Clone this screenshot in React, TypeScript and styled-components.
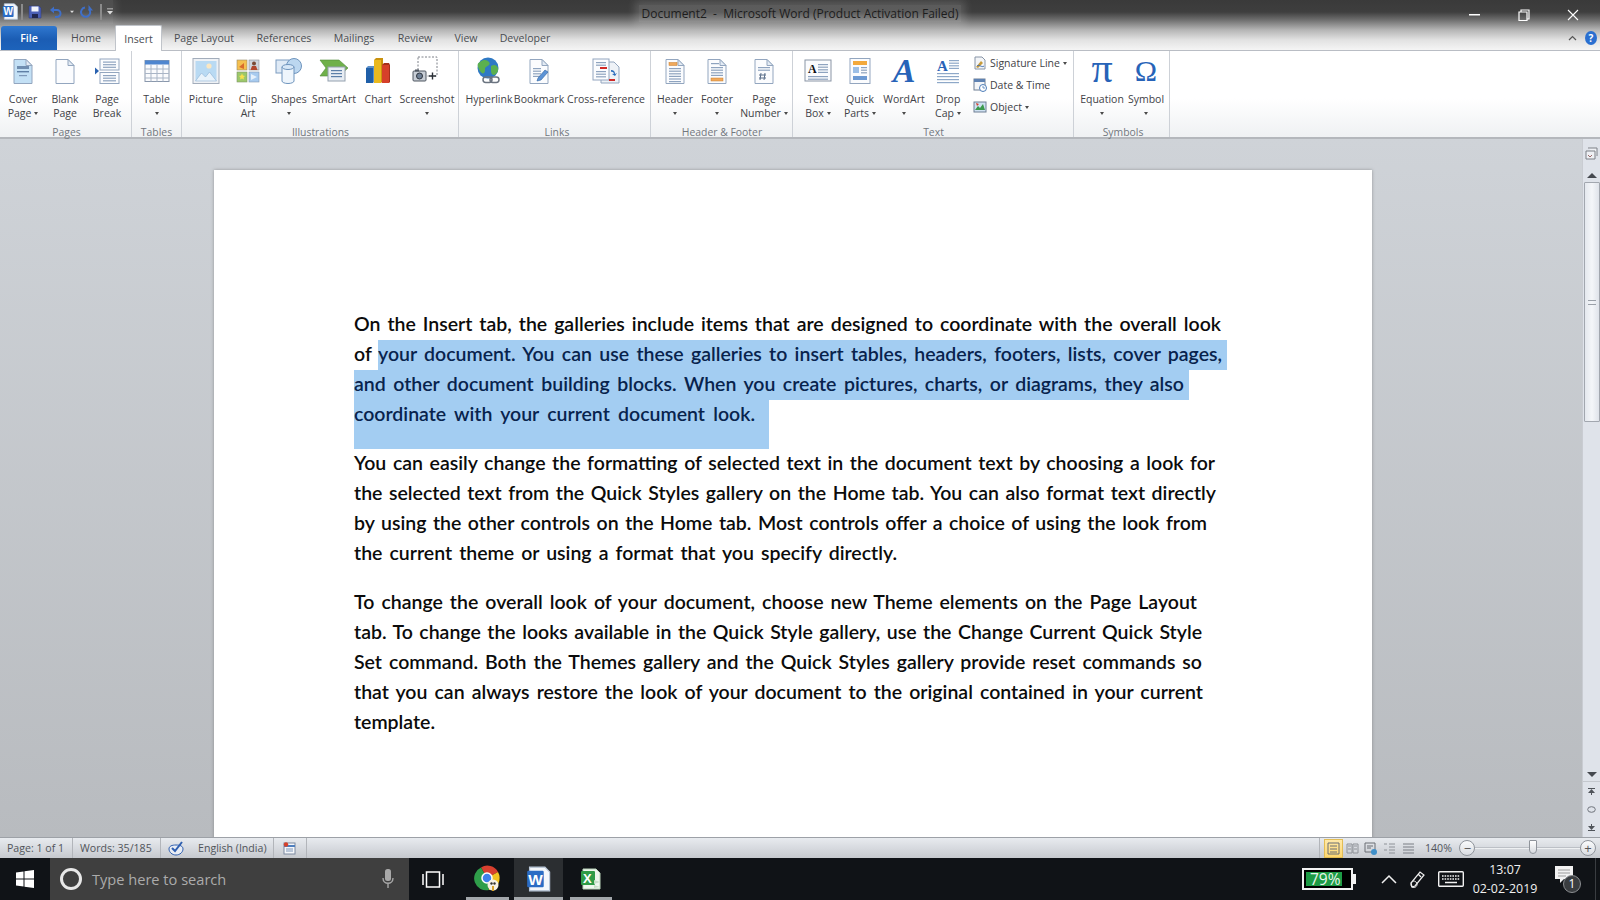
import React from "react";
import styled, { createGlobalStyle } from "styled-components";

const GlobalStyle = createGlobalStyle`
  html, body { margin: 0; padding: 0; width: 1600px; height: 900px; overflow: hidden; }
  body { font-family: "Open Sans", "Liberation Sans", sans-serif; }
  * { box-sizing: border-box; }
`;

const Window = styled.div`
  width: 1600px;
  height: 900px;
  display: flex;
  flex-direction: column;
  overflow: hidden;
`;

/* ---------- title bar + tabs ---------- */
const Chrome = styled.header`
  height: 51px;
  flex: none;
  display: flex;
  flex-direction: column;
  background: linear-gradient(#3a3a3a 0, #3e3e3e 12px, #6f6f6f 20px, #b5b5b5 30px, #e2e2e2 40px, #f5f5f5 50px);
`;

const TitleRow = styled.div`
  height: 26px;
  display: grid;
  grid-template-columns: 500px 1fr 500px;
  align-items: center;
`;

const Qat = styled.div`
  display: flex;
  align-items: center;
  height: 24px;
  padding-left: 2px;
  justify-self: start;
  background: rgba(255, 255, 255, 0.1);
  box-shadow: 0 0 8px 3px rgba(255, 255, 255, 0.1);
  margin-top: -3px;
`;

const QatSep = styled.span`
  width: 2px;
  height: 16px;
  margin: 0 5px 0 2px;
  background: #8b8b8b;
`;

const QatSlot = styled.span<{ $w: number }>`
  width: ${(p) => p.$w}px;
  display: flex;
  align-items: center;
  justify-content: center;
`;

const Title = styled.div`
  justify-self: center;
  font-size: 12px;
  color: #1d1d1d;
  white-space: pre;
  padding: 0 2px;
  background: rgba(255, 255, 255, 0.16);
  box-shadow: 0 0 9px 4px rgba(255, 255, 255, 0.16);
`;

const WindowButtons = styled.div`
  justify-self: end;
  display: flex;
  margin-right: 3px;
  margin-top: 4px;
`;

const WindowButton = styled.span`
  width: 49px;
  height: 20px;
  display: flex;
  align-items: center;
  justify-content: center;
  color: #fff;
`;

const TabRow = styled.nav`
  height: 25px;
  display: flex;
  align-items: flex-end;
  padding-left: 1px;
  border-bottom: 1px solid #b9bdc4;
`;

const Tab = styled.div<{ $w: number; $active?: boolean }>`
  width: ${(p) => p.$w}px;
  height: ${(p) => (p.$active ? "26px" : "24px")};
  margin-bottom: ${(p) => (p.$active ? "-1px" : "0")};
  display: flex;
  align-items: center;
  justify-content: center;
  font-size: 10.6px;
  color: #4a4d52;
  ${(p) =>
    p.$active &&
    `background: #fff;
     border: 1px solid #c0c4ca;
     border-bottom: none;
     border-radius: 2px 2px 0 0;`}
`;

const FileTab = styled.div`
  width: 56px;
  height: 24px;
  display: flex;
  align-items: center;
  justify-content: center;
  font-size: 10.6px;
  font-weight: 600;
  color: #fff;
  background: linear-gradient(#2f78d0, #1b5db4 55%, #1d63bb);
  border-radius: 3px 3px 0 0;
`;

const TabSpacer = styled.div`
  flex: 1;
`;

const RibbonTools = styled.div`
  display: flex;
  align-items: center;
  gap: 8px;
  padding: 0 3px 5px 0;
`;

const HelpDot = styled.span`
  width: 12px;
  height: 14px;
  border-radius: 50%;
  background: #2a6fd0;
  color: #fff;
  font-size: 10px;
  font-weight: 700;
  line-height: 14px;
  text-align: center;
`;

/* ---------- ribbon ---------- */
const Ribbon = styled.section`
  height: 88px;
  flex: none;
  display: flex;
  background: linear-gradient(#fff 55%, #eff1f3 100%);
  border-bottom: 2px solid #b4b7bc;
`;

const Group = styled.div<{ $w: number; $pad?: number }>`
  width: ${(p) => p.$w}px;
  flex: none;
  display: flex;
  flex-direction: column;
  padding-left: ${(p) => p.$pad ?? 0}px;
  border-right: 1px solid #cdd1d7;
`;

const GroupBody = styled.div`
  height: 71px;
  flex: none;
  display: flex;
`;

const GroupLabel = styled.div`
  flex: 1;
  font-size: 10.4px;
  line-height: 21px;
  text-align: center;
  color: #72777e;
`;

const BigButton = styled.div<{ $w: number }>`
  width: ${(p) => p.$w}px;
  flex: none;
  display: flex;
  flex-direction: column;
  align-items: center;
`;

const IconSlot = styled.div`
  height: 41px;
  padding: 5px 0 6px;
  display: flex;
  align-items: center;
  justify-content: center;
`;

const LabelLine = styled.div`
  height: 14px;
  display: flex;
  align-items: center;
  gap: 3px;
  font-size: 10.5px;
  color: #3f4247;
  white-space: nowrap;
`;

const Caret = styled.span`
  width: 0;
  height: 0;
  border-left: 2.5px solid transparent;
  border-right: 2.5px solid transparent;
  border-top: 3px solid #4a4a4a;
`;

const SmallStack = styled.div`
  margin-left: 7px;
  display: flex;
  flex-direction: column;
  padding-top: 1px;
`;

const SmallButton = styled.div`
  height: 22px;
  display: flex;
  align-items: center;
  gap: 3px;
  font-size: 10.5px;
  color: #3f4247;
  white-space: nowrap;
`;

const Glyph = styled.span<{ $size: number; $italic?: boolean; $weight?: number; $lift?: number }>`
  font-family: "Liberation Serif", "DejaVu Serif", serif;
  font-size: ${(p) => p.$size}px;
  font-style: ${(p) => (p.$italic ? "italic" : "normal")};
  font-weight: ${(p) => p.$weight ?? 700};
  line-height: 30px;
  padding-bottom: ${(p) => p.$lift ?? 0}px;
  color: #2763b8;
`;

/* ---------- document area ---------- */
const Workspace = styled.main`
  flex: 1;
  min-height: 0;
  display: flex;
`;

const Canvas = styled.div`
  flex: 1;
  overflow: hidden;
  padding: 31px 0 0 214px;
  background: linear-gradient(#cfd3d8, #b8bbbf);
`;

const Sheet = styled.article`
  width: 1158px;
  height: 700px;
  padding: 138.5px 0 0 140px;
  background: #fff;
  box-shadow: 0 0 3px rgba(90, 90, 90, 0.5);
  font-family: Lato, "Open Sans", sans-serif;
  font-size: 19.5px;
  font-weight: 600;
  color: #0b0b0b;
`;

const Paragraph = styled.div<{ $after: number }>`
  margin-bottom: ${(p) => p.$after}px;
`;

const Line = styled.div<{ $w: number; $h?: number }>`
  width: ${(p) => p.$w}px;
  height: ${(p) => p.$h ?? 30.1}px;
  line-height: 30px;
  text-align: justify;
  text-align-last: justify;
`;

const MixedLine = styled.div`
  display: flex;
  height: 30px;
  line-height: 27px;
`;

const Unselected = styled.span<{ $w: number }>`
  width: ${(p) => p.$w}px;
  flex: none;
`;

const Selected = styled.div<{ $w: number; $trail?: number; $extra?: number }>`
  width: ${(p) => p.$w}px;
  height: ${(p) => 30 + (p.$extra ?? 0)}px;
  line-height: 27px;
  padding-right: ${(p) => p.$trail ?? 5}px;
  background: #a3cdf2;
  color: #08234d;
  text-align: justify;
  text-align-last: justify;
`;

const ScrollBar = styled.aside`
  width: 18px;
  flex: none;
  display: flex;
  flex-direction: column;
  align-items: center;
  background: #dfe3ea;
  border-left: 1px solid #c9ccd2;
`;

const ScrollButton = styled.div<{ $h: number }>`
  height: ${(p) => p.$h}px;
  width: 100%;
  flex: none;
  display: flex;
  align-items: center;
  justify-content: center;
`;

const ScrollThumb = styled.div`
  width: 16px;
  height: 240px;
  flex: none;
  display: flex;
  align-items: center;
  justify-content: center;
  border: 1px solid #a2a7af;
  border-radius: 1px;
  background: linear-gradient(90deg, #e4e8ee, #f4f6f9 50%, #dfe3ea);
`;

const ScrollGrip = styled.span`
  width: 8px;
  height: 5px;
  border-top: 1px solid #9aa0a8;
  border-bottom: 1px solid #9aa0a8;
`;

const ScrollFill = styled.div`
  flex: 1;
`;

const ScrollNav = styled.div`
  width: 100%;
  flex: none;
  height: 56px;
  border-top: 1px solid #c4c8ce;
  display: flex;
  flex-direction: column;
  align-items: center;
  justify-content: space-around;
  padding-bottom: 1px;
`;

const ArrowUp = styled.span`
  width: 0;
  height: 0;
  border-left: 5px solid transparent;
  border-right: 5px solid transparent;
  border-bottom: 5px solid #45494f;
`;

const ArrowDown = styled.span`
  width: 0;
  height: 0;
  border-left: 5px solid transparent;
  border-right: 5px solid transparent;
  border-top: 5px solid #45494f;
`;

/* ---------- status bar ---------- */
const StatusBar = styled.footer`
  height: 21px;
  flex: none;
  display: flex;
  align-items: stretch;
  background: linear-gradient(#e8ebef, #d7dadf 50%, #c6c9ce);
  border-top: 1px solid #9da1a7;
  font-size: 10.6px;
  color: #50545a;
`;

const StatusCell = styled.div<{ $w: number; $pad?: number }>`
  width: ${(p) => p.$w}px;
  flex: none;
  display: flex;
  align-items: center;
  padding-left: ${(p) => p.$pad ?? 7}px;
  border-right: 1px solid #b2b5ba;
  white-space: nowrap;
`;

const LanguageText = styled.span`
  margin-left: 13px;
`;

const StatusRight = styled.div`
  margin-left: auto;
  width: 281px;
  display: flex;
  align-items: center;
  padding: 0 4px;
  border-left: 1px solid #b2b5ba;
`;

const ViewButton = styled.span<{ $on?: boolean }>`
  width: 18.7px;
  height: 19px;
  flex: none;
  display: flex;
  align-items: center;
  justify-content: center;
  ${(p) => p.$on && `background: linear-gradient(#ffe9a8, #ffd76e); border: 1px solid #e3bd55;`}
`;

const ZoomValue = styled.span`
  width: 42px;
  flex: none;
  text-align: center;
`;

const ZoomCircle = styled.span`
  width: 16px;
  height: 16px;
  flex: none;
  display: flex;
  align-items: center;
  justify-content: center;
  border: 1px solid #8f949b;
  border-radius: 50%;
  background: linear-gradient(#fafbfc, #d9dce1);
  font-size: 13px;
  line-height: 1;
  color: #555;
`;

const ZoomTrack = styled.div`
  flex: 1;
  height: 2px;
  position: relative;
  background: #bcc0c6;
  border-bottom: 1px solid #eef0f2;
`;

const ZoomThumb = styled.span`
  position: absolute;
  left: 54px;
  top: -7px;
  width: 8px;
  height: 14px;
  background: linear-gradient(#fff, #d8dbe0);
  border: 1px solid #8f949b;
  border-radius: 1px 1px 4px 4px;
`;

/* ---------- taskbar ---------- */
const Taskbar = styled.div`
  height: 42px;
  flex: none;
  display: flex;
  align-items: stretch;
  background: #101317;
  color: #fff;
`;

const StartButton = styled.div`
  width: 50px;
  flex: none;
  display: flex;
  align-items: center;
  justify-content: center;
`;

const SearchBox = styled.div`
  width: 359px;
  flex: none;
  display: flex;
  align-items: center;
  padding: 0 15px 0 10px;
  background: #3f3f3f;
`;

const SearchRing = styled.span`
  width: 22px;
  height: 22px;
  flex: none;
  border: 3px solid #e8e8e8;
  border-radius: 50%;
`;

const SearchText = styled.span`
  flex: 1;
  margin-left: 10px;
  font-size: 14.6px;
  color: #ababab;
`;

const TaskView = styled.div`
  width: 48px;
  flex: none;
  display: flex;
  align-items: center;
  justify-content: center;
`;

const AppSlot = styled.div<{ $w: number; $on?: boolean; $left?: number }>`
  width: ${(p) => p.$w}px;
  flex: none;
  margin-left: ${(p) => p.$left ?? 0}px;
  position: relative;
  display: flex;
  align-items: center;
  justify-content: center;
  background: ${(p) => (p.$on ? "#2b2e31" : "transparent")};
  &::after {
    content: "";
    position: absolute;
    left: 0;
    right: 0;
    bottom: 0;
    height: 3px;
    background: #a3a7ab;
  }
`;

const Tray = styled.div`
  margin-left: auto;
  width: 298px;
  flex: none;
  display: flex;
  align-items: center;
`;

const Battery = styled.div`
  width: 51px;
  height: 22px;
  flex: none;
  display: flex;
  padding: 2px;
  border: 2px solid #f2f2f2;
  background: #000;
  position: relative;
  &::after {
    content: "";
    position: absolute;
    right: -5px;
    top: 4px;
    width: 3px;
    height: 10px;
    background: #f2f2f2;
  }
`;

const BatteryFill = styled.div`
  width: 36px;
  background: #1c9a44;
  font-size: 15.5px;
  line-height: 15px;
  color: #e9f6ec;
  white-space: nowrap;
  padding-left: 4px;
`;

const TrayIcon = styled.span<{ $w: number; $left: number }>`
  width: ${(p) => p.$w}px;
  margin-left: ${(p) => p.$left}px;
  flex: none;
  display: flex;
  align-items: center;
  justify-content: center;
`;

const Clock = styled.div`
  width: 70px;
  margin-left: 6px;
  flex: none;
  text-align: center;
  font-size: 12.4px;
  line-height: 19px;
  color: #f1f1f1;
`;

const Notification = styled.div`
  width: 42px;
  margin-left: 8px;
  flex: none;
  height: 32px;
  position: relative;
  display: flex;
  align-items: flex-start;
  justify-content: flex-start;
  padding-left: 7px;
  margin-top: 4px;
`;

const NotificationBadge = styled.span`
  position: absolute;
  left: 15px;
  top: 10px;
  width: 18px;
  height: 18px;
  border-radius: 50%;
  background: #3a3d40;
  border: 1px solid #8c8f92;
  font-size: 12px;
  line-height: 16px;
  text-align: center;
  color: #fff;
`;

const TrayEdge = styled.span`
  width: 1px;
  height: 100%;
  background: #3a3d41;
  margin-left: auto;
  margin-right: 4px;
`;

/* ---------- icons ---------- */
const ink = "#93a6bf";

const Page: React.FC<{ fill?: string; children?: React.ReactNode }> = ({ fill = "#fbfcfe", children }) => (
  <svg width="28" height="28" viewBox="0 0 28 28">
    <path d="M5 2.5h12l6 6v18H5z" fill={fill} stroke={ink} />
    <path d="M17 2.5v6h6z" fill="#e3ebf4" stroke={ink} />
    {children}
  </svg>
);

const Rows: React.FC<{ x: number; y: number; w: number; n: number; gap?: number; color?: string }> = ({
  x,
  y,
  w,
  n,
  gap = 2.6,
  color = "#8ea3bf",
}) => (
  <>
    {Array.from({ length: n }).map((_, i) => (
      <rect key={i} x={x} y={y + i * gap} width={w} height="1.2" fill={color} />
    ))}
  </>
);

const CoverIcon = () => (
  <Page fill="#c3e0f5">
    <rect x="8" y="9" width="12" height="3" fill="#6f8db0" />
    <rect x="8" y="14" width="12" height="1.4" fill="#5f7fa5" />
    <rect x="10" y="18" width="8" height="1.2" fill="#7f98b8" />
  </Page>
);
const BlankIcon = () => <Page />;
const BreakIcon = () => (
  <svg width="28" height="28" viewBox="0 0 28 28">
    <rect x="7" y="2" width="19" height="11" fill="#fbfcfe" stroke={ink} />
    <rect x="7" y="15.5" width="19" height="11" fill="#fbfcfe" stroke={ink} />
    <Rows x={10} y={4.5} w={13} n={3} />
    <Rows x={10} y={18} w={13} n={3} />
    <path d="M2 10.5l4 3.5-4 3.5z" fill="#2a62b0" />
  </svg>
);
const TableIcon = () => (
  <svg width="26" height="24" viewBox="0 0 26 24">
    <rect x="1" y="1.5" width="24" height="21" fill="#fafbfd" stroke="#8a98ac" />
    <rect x="1" y="1.5" width="24" height="4" fill="#4f86cf" />
    <path d="M1 10h24M1 14.5h24M1 19h24M7 5.5v17M13 5.5v17M19 5.5v17" stroke="#a9b5c6" fill="none" />
  </svg>
);
const PictureIcon = () => (
  <svg width="28" height="28" viewBox="0 0 28 28">
    <rect x="1" y="1.5" width="26" height="25" fill="#eef1f5" stroke="#a3adbb" />
    <rect x="3.5" y="4" width="21" height="20" fill="#b9daf3" />
    <circle cx="17" cy="9" r="2.6" fill="#fbe7c2" />
    <path d="M3.5 24l6-8 4 4 4-5 7 9z" fill="#e9f3fb" stroke="#8fb1d3" strokeWidth=".6" />
  </svg>
);
const ClipArtIcon = () => (
  <svg width="24" height="24" viewBox="0 0 24 24">
    <rect x="1" y="1" width="10" height="10" fill="#f5c04f" stroke="#9a8a66" strokeWidth=".6" />
    <path d="M3 8l5-4v6z" fill="#d96a2c" />
    <rect x="13" y="1" width="10" height="10" fill="#cfd5dc" stroke="#8a8f96" strokeWidth=".6" />
    <circle cx="18" cy="4.5" r="2" fill="#7a4a35" />
    <path d="M14.500 11l1.500-4h4l1.500 4z" fill="#b1472d" />
    <rect x="1" y="13" width="10" height="10" fill="#9cc86a" stroke="#7f946a" strokeWidth=".6" />
    <path d="M6 14.500l1 2 2 .5-1.500 1.500.5 2-2-1-2 1 .5-2L3 17l2-.5z" fill="#f8e04d" />
    <rect x="13" y="13" width="10" height="10" fill="#a8cbef" stroke="#7f97b2" strokeWidth=".6" />
    <path d="M15 15l6 3-6 3z" fill="#e6f1fb" />
  </svg>
);
const ShapesIcon = () => (
  <svg width="28" height="28" viewBox="0 0 28 28">
    <rect x="1" y="3" width="13" height="13" fill="#dfeaf6" stroke="#7d9cc0" />
    <circle cx="19" cy="9" r="7.500" fill="#bcd7f0" stroke="#6e94bd" />
    <path d="M7 10h12v14a6 2.500 0 0 1-12 0z" fill="#eef5fc" stroke="#6e94bd" />
    <ellipse cx="13" cy="10" rx="6" ry="2.500" fill="#d7e7f7" stroke="#6e94bd" />
  </svg>
);
const SmartArtIcon = () => (
  <svg width="30" height="28" viewBox="0 0 30 28">
    <path d="M1 3h19l9 8-9 8H1l6-8z" fill="#6fb04a" stroke="#4f8a35" strokeWidth=".6" />
    <rect x="9" y="10" width="17" height="14" fill="#e8edf3" stroke="#94a0ae" />
    <Rows x={12} y={13} w={11} n={3} gap={3} color="#5c7fa8" />
  </svg>
);
const ChartIcon = () => (
  <svg width="26" height="28" viewBox="0 0 26 28">
    <rect x="1" y="11" width="7" height="15" fill="#1f5fa8" />
    <path d="M1 11l2-2h7l-2 2zM8 11l2-2v15l-2 2z" fill="#5b8fc9" />
    <rect x="9" y="3" width="7" height="23" fill="#eab91f" />
    <path d="M9 3l2-2h7l-2 2zM16 3l2-2v23l-2 2z" fill="#c9920e" />
    <rect x="17" y="8" width="7" height="18" fill="#d6402a" />
    <path d="M17 8l2-2h5l-0 2zM24 8l1-2v19l-1 1z" fill="#a52f1c" />
  </svg>
);
const ScreenshotIcon = () => (
  <svg width="30" height="30" viewBox="0 0 30 30">
    <rect x="6" y="1" width="19" height="19" fill="none" stroke="#7d8088" strokeDasharray="2 1.500" />
    <rect x="1" y="15" width="13" height="10" rx="1" fill="#c8ced6" stroke="#4f5661" />
    <circle cx="7.500" cy="20" r="3" fill="#6f8095" stroke="#2f3640" />
    <rect x="3" y="13.500" width="4" height="2" fill="#4f5661" />
    <path d="M17 20h7M20.500 16.500v7" stroke="#2a2f36" strokeWidth="1.400" />
  </svg>
);
const HyperlinkIcon = () => (
  <svg width="28" height="28" viewBox="0 0 28 28">
    <circle cx="13" cy="11" r="10.500" fill="#2f79c4" />
    <path d="M5 5c4-3 7-2 9 0s-1 4-3 5 0 4-2 6-5-3-6-6 0-4 2-5zM16 9c3-2 6-1 7 2s-2 7-4 7-3-2-3-4 0-4 0-5z" fill="#5bb04f" />
    <rect x="8" y="20" width="9" height="5.500" rx="2.700" fill="none" stroke="#6b7480" strokeWidth="1.500" />
    <rect x="15" y="20" width="9" height="5.500" rx="2.700" fill="none" stroke="#6b7480" strokeWidth="1.500" />
  </svg>
);
const BookmarkIcon = () => (
  <Page>
    <Rows x={8} y={11} w={8} n={4} />
    <path d="M13 21l7-8 3 2-7 8-4 1z" fill="#5c93d6" stroke="#2e629f" strokeWidth=".6" />
  </Page>
);
const CrossRefIcon = () => (
  <svg width="30" height="28" viewBox="0 0 30 28">
    <path d="M10 5h13l5 5v16H10z" fill="#eef2f7" stroke={ink} />
    <rect x="2" y="2" width="16" height="21" fill="#fbfcfe" stroke={ink} />
    <Rows x={5} y={5} w={10} n={2} />
    <rect x="9" y="10" width="7" height="2" fill="#cf2a27" />
    <Rows x={5} y={14} w={10} n={3} />
    <rect x="18" y="22" width="6" height="2" fill="#cf2a27" />
    <path d="M20 13a4 4 0 0 1 4 4l2-1-2 3-3-2 2-.2a2.500 2.500 0 0 0-3-2z" fill="#2a6dbd" />
  </svg>
);
const HeaderIcon = () => (
  <Page>
    <rect x="8" y="5.500" width="8" height="3" fill="#f0a95c" stroke="#c97d2a" strokeWidth=".5" />
    <Rows x={8} y={11} w={12} n={6} />
  </Page>
);
const FooterIcon = () => (
  <Page>
    <Rows x={8} y={6} w={8} n={1} />
    <Rows x={8} y={10} w={12} n={4} />
    <rect x="8" y="21" width="12" height="3" fill="#f0a95c" stroke="#c97d2a" strokeWidth=".5" />
  </Page>
);
const PageNumberIcon = () => (
  <Page>
    <Rows x={8} y={10} w={12} n={2} />
    <path d="M11 16l-1 7M15 16l-1 7M9 18h7M9 21h7" stroke="#5b6f8a" strokeWidth="1" />
  </Page>
);
const TextBoxIcon = () => (
  <svg width="28" height="26" viewBox="0 0 28 26">
    <rect x="1" y="2" width="26" height="21" fill="#fbfcfe" stroke="#8a95a5" />
    <text x="4" y="15" fontFamily="Liberation Serif, serif" fontWeight="700" fontSize="12" fill="#111">A</text>
    <Rows x={14} y={6} w={10} n={4} />
    <Rows x={4} y={18} w={20} n={2} />
  </svg>
);
const QuickPartsIcon = () => (
  <svg width="24" height="28" viewBox="0 0 24 28">
    <rect x="2" y="1.500" width="20" height="25" fill="#fbfcfe" stroke={ink} />
    <rect x="5" y="4" width="14" height="4" fill="#f3a93c" />
    <rect x="5" y="10" width="6" height="6" fill="#9dbfe6" />
    <Rows x={13} y={10} w={6} n={3} />
    <rect x="5" y="19" width="14" height="4" fill="#6d9ad3" />
  </svg>
);
const DropCapIcon = () => (
  <svg width="24" height="28" viewBox="0 0 24 28">
    <text x="1" y="14" fontFamily="Liberation Serif, serif" fontWeight="700" fontSize="15" fill="#2763b8">A</text>
    <Rows x={13} y={3} w={10} n={4} color="#8ea8c8" />
    <Rows x={1} y={16} w={22} n={4} color="#8ea8c8" gap={3} />
  </svg>
);
const SignatureIcon = () => (
  <svg width="14" height="14" viewBox="0 0 14 14">
    <path d="M2 1h7l3 3v9H2z" fill="#f3f5f8" stroke="#8794a6" />
    <path d="M3 11l5-6 2 2-5 5z" fill="#c79b3b" />
    <path d="M4 10c2-2 5 2 7 0" fill="none" stroke="#3c6cb0" />
  </svg>
);
const DateIcon = () => (
  <svg width="14" height="14" viewBox="0 0 14 14">
    <rect x="1" y="1" width="11" height="11" fill="#f3f5f8" stroke="#6f7f94" />
    <rect x="1" y="1" width="11" height="3" fill="#5f82b2" />
    <circle cx="10" cy="10" r="3.500" fill="#fff" stroke="#4c7cb8" />
    <path d="M10 8v2h2" stroke="#4c7cb8" fill="none" strokeWidth=".8" />
  </svg>
);
const ObjectIcon = () => (
  <svg width="14" height="14" viewBox="0 0 14 14">
    <rect x="1" y="2" width="12" height="10" fill="#cfe1f2" stroke="#6f7f94" />
    <path d="M2 10l3-4 2 2 3-4 2 6z" fill="#3c9a4d" />
    <path d="M3 3l3 1-2 2z" fill="#d6402a" />
  </svg>
);

const WordLogo: React.FC<{ size: number }> = ({ size }) => (
  <svg width={size} height={size} viewBox="0 0 22 22">
    <path d="M3 1h13l4 4v16H3z" fill="#f4f7fb" stroke="#b9c7da" />
    <rect x="1" y="4" width="14" height="14" rx="1" fill="#2b6cc4" />
    <text x="2" y="16" fontFamily="Liberation Sans, sans-serif" fontWeight="700" fontSize="13" fill="#fff">W</text>
  </svg>
);

const ExcelLogo = () => (
  <svg width="22" height="24" viewBox="0 0 22 22">
    <path d="M3 1h13l4 4v16H3z" fill="#eef6ee" stroke="#b9d4ba" />
    <rect x="1" y="3" width="14" height="14" rx="1" fill="#2f9b47" />
    <text x="3" y="15" fontFamily="Liberation Sans, sans-serif" fontWeight="700" fontSize="13" fill="#fff">X</text>
    <path d="M14 12l6 2-6 2zM14 17l6 2-6 1z" fill="#c7dfc8" />
  </svg>
);

const ChromeLogo = () => (
  <svg width="28" height="28" viewBox="0 0 28 28">
    <path d="M13 13L7 2.500A12 12 0 0 1 24 7z" fill="#d8402f" />
    <path d="M13 13L24 7a12 12 0 0 1-9 18z" fill="#f3c322" />
    <path d="M13 13l2 12A12 12 0 0 1 7 2.500z" fill="#2f9e4a" />
    <circle cx="13" cy="13" r="5" fill="#3f82ea" stroke="#fff" strokeWidth="1.500" />
    <circle cx="19" cy="20" r="5.500" fill="#f6f1e3" />
    <circle cx="17.500" cy="18.500" r="1.200" fill="#333" />
    <circle cx="20.500" cy="18.500" r="1.200" fill="#333" />
    <path d="M19 21v5" stroke="#d9a32c" strokeWidth="2" />
  </svg>
);

type BigProps = { w: number; icon: React.ReactNode; lines: string[]; caret?: boolean };

const Big: React.FC<BigProps> = ({ w, icon, lines, caret }) => (
  <BigButton $w={w}>
    <IconSlot>{icon}</IconSlot>
    <LabelLine>{lines[0]}</LabelLine>
    <LabelLine>
      {lines[1]}
      {caret && <Caret />}
    </LabelLine>
  </BigButton>
);

const App: React.FC = () => {
  return (
    <Window>
      <GlobalStyle />
      <Chrome>
        <TitleRow>
          <Qat>
            <WordLogo size={17} />
            <QatSep />
            <QatSlot $w={14}>
              <svg width="14" height="14" viewBox="0 0 14 14">
                <path d="M1 1h10l2 2v10H1z" fill="#4b5fb5" stroke="#2f3a78" strokeWidth=".5" />
                <rect x="3.500" y="1.500" width="7" height="5" fill="#f2f4fa" />
                <rect x="4" y="9" width="6" height="4" fill="#20264f" />
              </svg>
            </QatSlot>
            <QatSlot $w={28}>
              <svg width="14" height="14" viewBox="0 0 14 14">
                <path d="M3 5h5a3.500 3.500 0 0 1 0 7H6" fill="none" stroke="#3f6fc8" strokeWidth="2" />
                <path d="M5 1.500v7L1 5z" fill="#3f6fc8" />
              </svg>
            </QatSlot>
            <QatSlot $w={4}>
              <svg width="6" height="4" viewBox="0 0 6 4"><path d="M0 0h6L3 3.500z" fill="#e0e0e0" /></svg>
            </QatSlot>
            <QatSlot $w={24}>
              <svg width="14" height="14" viewBox="0 0 14 14">
                <path d="M10 4a4.600 4.600 0 1 1-4-1.400" fill="none" stroke="#3f6fc8" strokeWidth="2" />
                <path d="M9.500 0v5.500H14z" fill="#3f6fc8" />
              </svg>
            </QatSlot>
            <QatSep />
            <QatSlot $w={6}>
              <svg width="7" height="7" viewBox="0 0 7 7"><path d="M0 0h7v1H0zM0 3h7L3.500 7z" fill="#ddd" /></svg>
            </QatSlot>
          </Qat>
          <Title>Document2  -  Microsoft Word (Product Activation Failed)</Title>
          <WindowButtons>
            <WindowButton>
              <svg width="12" height="2" viewBox="0 0 12 2"><rect width="11" height="1.500" fill="#fff" /></svg>
            </WindowButton>
            <WindowButton>
              <svg width="12" height="12" viewBox="0 0 12 12"><path d="M3 2.500V1h8v9H9.500M1 3h8v8.500H1z" fill="none" stroke="#fff" strokeWidth="1.200" /></svg>
            </WindowButton>
            <WindowButton>
              <svg width="12" height="12" viewBox="0 0 12 12"><path d="M1 1l10 10M11 1L1 11" stroke="#fff" strokeWidth="1.100" /></svg>
            </WindowButton>
          </WindowButtons>
        </TitleRow>
        <TabRow>
          <FileTab>File</FileTab>
          <Tab $w={58}>Home</Tab>
          <Tab $w={47} $active>Insert</Tab>
          <Tab $w={84}>Page Layout</Tab>
          <Tab $w={76}>References</Tab>
          <Tab $w={64}>Mailings</Tab>
          <Tab $w={58}>Review</Tab>
          <Tab $w={44}>View</Tab>
          <Tab $w={74}>Developer</Tab>
          <TabSpacer />
          <RibbonTools>
            <svg width="9" height="7" viewBox="0 0 9 7"><path d="M1 5l3.500-3.500L8 5" fill="none" stroke="#555" strokeWidth="1.200" /></svg>
            <HelpDot>?</HelpDot>
          </RibbonTools>
        </TabRow>
      </Chrome>

      <Ribbon>
        <Group $w={132} $pad={2}>
          <GroupBody>
            <Big w={42} icon={<CoverIcon />} lines={["Cover", "Page"]} caret />
            <Big w={42} icon={<BlankIcon />} lines={["Blank", "Page"]} />
            <Big w={42} icon={<BreakIcon />} lines={["Page", "Break"]} />
          </GroupBody>
          <GroupLabel>Pages</GroupLabel>
        </Group>
        <Group $w={50}>
          <GroupBody>
            <Big w={49} icon={<TableIcon />} lines={["Table", ""]} caret />
          </GroupBody>
          <GroupLabel>Tables</GroupLabel>
        </Group>
        <Group $w={277} $pad={1}>
          <GroupBody>
            <Big w={46} icon={<PictureIcon />} lines={["Picture", ""]} />
            <Big w={38} icon={<ClipArtIcon />} lines={["Clip", "Art"]} />
            <Big w={44} icon={<ShapesIcon />} lines={["Shapes", ""]} caret />
            <Big w={46} icon={<SmartArtIcon />} lines={["SmartArt", ""]} />
            <Big w={42} icon={<ChartIcon />} lines={["Chart", ""]} />
            <Big w={56} icon={<ScreenshotIcon />} lines={["Screenshot", ""]} caret />
          </GroupBody>
          <GroupLabel>Illustrations</GroupLabel>
        </Group>
        <Group $w={192} $pad={5}>
          <GroupBody>
            <Big w={50} icon={<HyperlinkIcon />} lines={["Hyperlink", ""]} />
            <Big w={50} icon={<BookmarkIcon />} lines={["Bookmark", ""]} />
            <Big w={84} icon={<CrossRefIcon />} lines={["Cross-reference", ""]} />
          </GroupBody>
          <GroupLabel>Links</GroupLabel>
        </Group>
        <Group $w={142} $pad={1}>
          <GroupBody>
            <Big w={46} icon={<HeaderIcon />} lines={["Header", ""]} caret />
            <Big w={38} icon={<FooterIcon />} lines={["Footer", ""]} caret />
            <Big w={56} icon={<PageNumberIcon />} lines={["Page", "Number"]} caret />
          </GroupBody>
          <GroupLabel>Header &amp; Footer</GroupLabel>
        </Group>
        <Group $w={281} $pad={1}>
          <GroupBody>
            <Big w={48} icon={<TextBoxIcon />} lines={["Text", "Box"]} caret />
            <Big w={36} icon={<QuickPartsIcon />} lines={["Quick", "Parts"]} caret />
            <Big w={52} icon={<Glyph $size={34} $italic>A</Glyph>} lines={["WordArt", ""]} caret />
            <Big w={36} icon={<DropCapIcon />} lines={["Drop", "Cap"]} caret />
            <SmallStack>
              <SmallButton><SignatureIcon />Signature Line<Caret /></SmallButton>
              <SmallButton><DateIcon />Date &amp; Time</SmallButton>
              <SmallButton><ObjectIcon />Object<Caret /></SmallButton>
            </SmallStack>
          </GroupBody>
          <GroupLabel>Text</GroupLabel>
        </Group>
        <Group $w={96} $pad={3}>
          <GroupBody>
            <Big w={50} icon={<Glyph $size={42} $weight={400} $lift={6}>π</Glyph>} lines={["Equation", ""]} caret />
            <Big w={38} icon={<Glyph $size={30} $weight={400}>Ω</Glyph>} lines={["Symbol", ""]} caret />
          </GroupBody>
          <GroupLabel>Symbols</GroupLabel>
        </Group>
      </Ribbon>

      <Workspace>
        <Canvas>
          <Sheet>
            <Paragraph $after={-1.5}>
              <Line $w={867} $h={31.5}>On the Insert tab, the galleries include items that are designed to coordinate with the overall look</Line>
              <MixedLine>
                <Unselected $w={24}>of</Unselected>
                <Selected $w={849}>your document. You can use these galleries to insert tables, headers, footers, lists, cover pages,</Selected>
              </MixedLine>
              <Selected $w={835}>and other document building blocks. When you create pictures, charts, or diagrams, they also</Selected>
              <Selected $w={415} $trail={14} $extra={19}>coordinate with your current document look.</Selected>
            </Paragraph>
            <Paragraph $after={19}>
              <Line $w={861}>You can easily change the formatting of selected text in the document text by choosing a look for</Line>
              <Line $w={862}>the selected text from the Quick Styles gallery on the Home tab. You can also format text directly</Line>
              <Line $w={853}>by using the other controls on the Home tab. Most controls offer a choice of using the look from</Line>
              <Line $w={543}>the current theme or using a format that you specify directly.</Line>
            </Paragraph>
            <Paragraph $after={0}>
              <Line $w={843}>To change the overall look of your document, choose new Theme elements on the Page Layout</Line>
              <Line $w={848}>tab. To change the looks available in the Quick Style gallery, use the Change Current Quick Style</Line>
              <Line $w={848}>Set command. Both the Themes gallery and the Quick Styles gallery provide reset commands so</Line>
              <Line $w={849}>that you can always restore the look of your document to the original contained in your current</Line>
              <Line $w={87}>template.</Line>
            </Paragraph>
          </Sheet>
        </Canvas>
        <ScrollBar>
          <ScrollButton $h={29}>
            <svg width="13" height="13" viewBox="0 0 13 13">
              <path d="M1 4h9v8H1zM3 1h9v8" fill="#eef0f4" stroke="#7c8087" />
              <path d="M3 8l2 2 2-2" fill="none" stroke="#9b6a6a" />
            </svg>
          </ScrollButton>
          <ScrollButton $h={14}><ArrowUp /></ScrollButton>
          <ScrollThumb><ScrollGrip /></ScrollThumb>
          <ScrollFill />
          <ScrollButton $h={14}><ArrowDown /></ScrollButton>
          <ScrollNav>
            <svg width="7" height="7" viewBox="0 0 7 7"><path d="M0 0h7v1H0zM3.500 1L7 5H0zM3 5h1v2H3z" fill="#50545a" /></svg>
            <svg width="9" height="7" viewBox="0 0 9 7"><ellipse cx="4.500" cy="3.500" rx="3.800" ry="2.800" fill="none" stroke="#70757c" /></svg>
            <svg width="7" height="7" viewBox="0 0 7 7"><path d="M3 0h1v2H3zM0 2h7L3.500 6zM0 6h7v1H0z" fill="#50545a" /></svg>
          </ScrollNav>
        </ScrollBar>
      </Workspace>

      <StatusBar>
        <StatusCell $w={73}>Page: 1 of 1</StatusCell>
        <StatusCell $w={88} $pad={7}>Words: 35/185</StatusCell>
        <StatusCell $w={113} $pad={6}>
          <svg width="18" height="17" viewBox="0 0 18 17">
            <path d="M2 9c0-3 3-4 7-4s7 1 7 4-3 6-7 6-7-3-7-6z" fill="#e9edf4" stroke="#2f5fb0" />
            <path d="M5 8l3 3 7-9" fill="none" stroke="#2f5fb0" strokeWidth="2" />
          </svg>
          <LanguageText>English (India)</LanguageText>
        </StatusCell>
        <StatusCell $w={33} $pad={9}>
          <svg width="13" height="13" viewBox="0 0 13 13">
            <rect x="1" y="1" width="11" height="11" fill="#f5f7fa" stroke="#7d8aa0" />
            <rect x="1" y="3" width="11" height="2" fill="#4f7fbe" />
            <circle cx="3" cy="2.500" r="2.200" fill="#d6402a" />
            <path d="M3 7h7M3 9h7" stroke="#7f96b8" />
          </svg>
        </StatusCell>
        <StatusRight>
          <ViewButton $on>
            <svg width="13" height="13" viewBox="0 0 13 13"><path d="M1 1h11v11H1zM3 4h7M3 7h7M3 10h7" fill="none" stroke="#6b6f75" /></svg>
          </ViewButton>
          <ViewButton>
            <svg width="13" height="13" viewBox="0 0 13 13"><path d="M1 2h5v9H1zM7 2h5v9H7zM2 4h3M2 7h3M8 4h3M8 7h3" fill="none" stroke="#8e9298" /></svg>
          </ViewButton>
          <ViewButton>
            <svg width="13" height="13" viewBox="0 0 13 13"><path d="M1 1h10v9H1zM3 4h6M3 6h4" fill="none" stroke="#6b6f75" /><circle cx="10" cy="10" r="3" fill="#3f8fc8" /></svg>
          </ViewButton>
          <ViewButton>
            <svg width="13" height="13" viewBox="0 0 13 13"><path d="M1 2h3M6 2h6M6 5h6M1 8h3M6 8h6M6 11h6" fill="none" stroke="#8e9298" /></svg>
          </ViewButton>
          <ViewButton>
            <svg width="13" height="13" viewBox="0 0 13 13"><path d="M1 2h11M1 5h11M1 8h11M1 11h11" fill="none" stroke="#7b7f85" /></svg>
          </ViewButton>
          <ZoomValue>140%</ZoomValue>
          <ZoomCircle>−</ZoomCircle>
          <ZoomTrack><ZoomThumb /></ZoomTrack>
          <ZoomCircle>+</ZoomCircle>
        </StatusRight>
      </StatusBar>

      <Taskbar>
        <StartButton>
          <svg width="18" height="18" viewBox="0 0 18 18">
            <path d="M0 2.500l7.500-1v7H0zM8.500 1.300L18 0v8.500H8.500zM0 9.500h7.500v7l-7.500-1zM8.500 9.500H18V18l-9.500-1.300z" fill="#fff" />
          </svg>
        </StartButton>
        <SearchBox>
          <SearchRing />
          <SearchText>Type here to search</SearchText>
          <svg width="12" height="20" viewBox="0 0 12 20">
            <rect x="3" y="0" width="6" height="12" rx="2.500" fill="#a8a8a8" />
            <path d="M1 9c0 7 10 7 10 0M6 15v4" fill="none" stroke="#a8a8a8" strokeWidth="1.400" />
          </svg>
        </SearchBox>
        <TaskView>
          <svg width="22" height="17" viewBox="0 0 22 17">
            <rect x="4.500" y="1" width="13" height="15" fill="none" stroke="#fff" strokeWidth="1.500" />
            <path d="M1 3v11M21 3v11" stroke="#fff" strokeWidth="1.500" />
          </svg>
        </TaskView>
        <AppSlot $w={43} $left={9}><ChromeLogo /></AppSlot>
        <AppSlot $w={49} $left={5} $on><WordLogo size={26} /></AppSlot>
        <AppSlot $w={42} $left={7}><ExcelLogo /></AppSlot>
        <Tray>
          <Battery><BatteryFill>79%</BatteryFill></Battery>
          <TrayIcon $w={22} $left={25}>
            <svg width="16" height="10" viewBox="0 0 16 10"><path d="M1 9l7-7 7 7" fill="none" stroke="#f0f0f0" strokeWidth="1.500" /></svg>
          </TrayIcon>
          <TrayIcon $w={22} $left={7}>
            <svg width="18" height="20" viewBox="0 0 18 20">
              <path d="M3 18l-1-4 9-11 4 3-9 11z M9 5l3 3" fill="none" stroke="#f0f0f0" strokeWidth="1.200" />
              <path d="M3 18c-3-3 1-8 4-5s-1 7-4 5" fill="none" stroke="#f0f0f0" />
            </svg>
          </TrayIcon>
          <TrayIcon $w={26} $left={9}>
            <svg width="26" height="16" viewBox="0 0 26 16">
              <rect x=".7" y=".7" width="24.600" height="14.600" rx="1" fill="none" stroke="#f2f2f2" strokeWidth="1.400" />
              <path d="M4 5h18M4 8h18" stroke="#f2f2f2" strokeWidth="1.500" strokeDasharray="1.600 1" />
              <path d="M7 11.500h12" stroke="#f2f2f2" strokeWidth="1.500" />
            </svg>
          </TrayIcon>
          <Clock>13:07<br />02-02-2019</Clock>
          <Notification>
            <svg width="19" height="20" viewBox="0 0 19 20">
              <path d="M0 1h18v13h-9l-4 4v-4H0z" fill="#f2f2f2" />
              <path d="M3 5h12M3 8h12M3 11h8" stroke="#9c9c9c" />
            </svg>
            <NotificationBadge>1</NotificationBadge>
          </Notification>
          <TrayEdge />
        </Tray>
      </Taskbar>
    </Window>
  );
};

export default App;
